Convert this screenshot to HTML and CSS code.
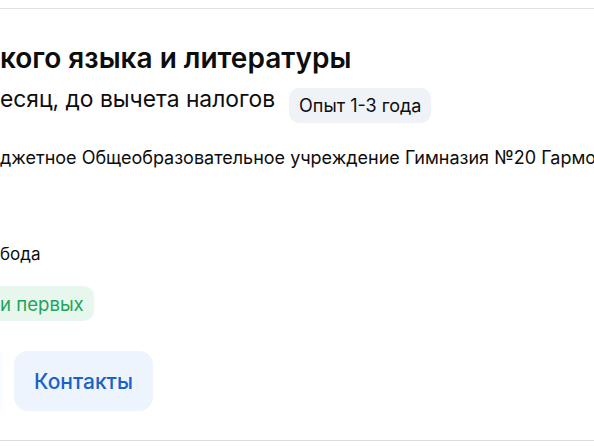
FILE: index.html
```html
<!DOCTYPE html>
<html lang="ru">
<head>
<meta charset="utf-8">
<link rel="stylesheet" href="styles.css">
</head>
<body>
<div class="card">
  <div class="content">
    <h2 class="title">кого языка и литературы</h2>
    <div class="salary-row">
      <span class="salary">есяц, до вычета налогов</span>
      <span class="chip">Опыт 1-3 года</span>
    </div>
    <div class="company">джетное Общеобразовательное учреждение Гимназия №20 Гармо</div>
    <div class="address">бода</div>
    <div class="green-chip">и первых</div>
    <div class="actions">
      <span class="ghost-btn"></span>
      <button class="btn">Контакты</button>
    </div>
  </div>
</div>
</body>
</html>
```
FILE: styles.css
```css
html, body {
  margin: 0;
  padding: 0;
  background: #ffffff;
  overflow: hidden;
}
body {
  font-family: Inter, "Noto Sans", sans-serif;
  color: #0d0d0d;
}
.card {
  margin-top: 8px;
  height: 431px;
  border-top: 1px solid #e0e0e0;
  border-bottom: 1px solid #dcdcdc;
  box-shadow: 0 1px 2px rgba(0,0,0,0.03);
  white-space: nowrap;
  overflow: hidden;
}
.content {
  padding-top: 32px;
}
.title {
  margin: 0;
  font-size: 28px;
  line-height: 34px;
  font-weight: 600;
}
.salary-row {
  margin-top: 10px;
  display: flex;
  align-items: flex-start;
  gap: 14px;
}
.salary {
  font-size: 22.8px;
  line-height: 28px;
  font-weight: 400;
}
.chip {
  margin-top: 3px;
  background: #eff3f8;
  border-radius: 10px;
  padding: 0 10px;
  height: 35px;
  display: inline-flex;
  align-items: center;
  font-size: 18px;
}
.company {
  margin-top: 23px;
  font-size: 18px;
  line-height: 24px;
}
.address {
  margin-top: 72px;
  font-size: 17px;
  line-height: 24px;
}
.green-chip {
  margin-top: 20px;
  display: inline-flex;
  align-items: center;
  height: 35px;
  padding-right: 10px;
  background: #e8f7ed;
  color: #1ea45a;
  border-radius: 0 10px 10px 0;
  font-size: 18.6px;
}
.actions {
  margin-top: 30px;
  display: flex;
  align-items: center;
  gap: 11px;
}
.ghost-btn {
  width: 3px;
  height: 60px;
  background: #f8fbff;
  border-radius: 0 12px 12px 0;
}
.btn {
  border: none;
  background: #edf4fe;
  color: #1862c8;
  font-family: inherit;
  font-size: 21px;
  font-weight: 500;
  height: 60px;
  width: 139px;
  border-radius: 14px;
  padding: 0;
}
```
